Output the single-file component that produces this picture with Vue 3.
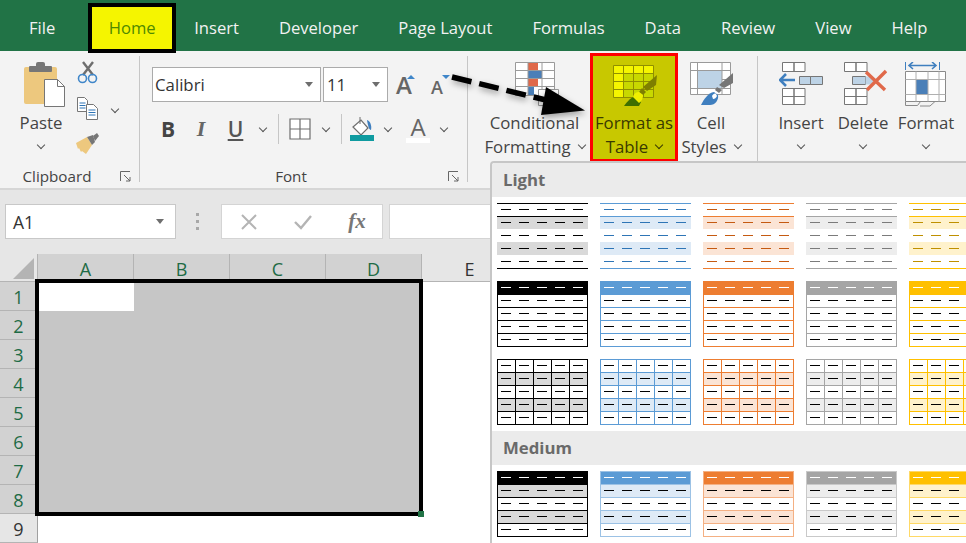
<template>
  <div class="excel">
    <!-- tabs -->
    <div class="tabs">
      <div v-for="t in tabs" :key="t" class="tab" :class="{ home: t === 'Home' }">{{ t }}</div>
    </div>

    <!-- ribbon -->
    <div class="ribbon">
      <div class="group clipboard">
        <div class="group-body clip-body">
          <div class="big-btn paste-btn">
            <svg class="big-icon paste-icon" width="41" height="45" viewBox="0 0 41 45">
              <rect x="0" y="5" width="33" height="37" rx="2" fill="#edc87e" />
              <rect x="5" y="4" width="23" height="6" rx="1" fill="#767676" />
              <rect x="12" y="0" width="9" height="6" rx="2" fill="#767676" />
              <path d="M20.5 17.5h13l7 7v20h-20z" fill="#fff" stroke="#767676" />
              <path d="M33.5 17.5v7h7" fill="none" stroke="#767676" />
            </svg>
            <span class="btn-line">Paste</span>
            <span class="btn-line"><i class="chev"></i></span>
          </div>
          <div class="small-col">
            <svg width="22" height="23" viewBox="0 0 22 23">
              <path d="M6 14L16 1M16 14L6 1" stroke="#6e6e6e" stroke-width="2.4" fill="none" />
              <circle cx="5.5" cy="17.5" r="4" fill="none" stroke="#3f86c9" stroke-width="1.6" />
              <circle cx="15.5" cy="17.5" r="4" fill="none" stroke="#3f86c9" stroke-width="1.6" />
            </svg>
            <svg width="22" height="23" viewBox="0 0 22 23">
              <path d="M.5.5h7l3 3v11H.5z" fill="#fff" stroke="#767676" />
              <path d="M2.5 6h6M2.5 8.5h6M2.5 11h6" stroke="#2e75b6" />
              <path d="M9.5 7.5h7l4 4v11h-11z" fill="#fff" stroke="#767676" />
              <path d="M11.5 13h7M11.5 15.5h7M11.5 18h7" stroke="#2e75b6" />
            </svg>
            <svg width="24" height="22" viewBox="0 0 24 22">
              <path d="M0 10l11-6 5 8-6 9-4-3-1 1-2-4-1 1z" fill="#edc87e" />
              <path d="M11 4l6-2 2 7-3 3z" fill="#767676" />
              <path d="M17 3l4-3 2 3-4 5z" fill="#767676" />
            </svg>
          </div>
          <i class="chev copy-chev"></i>
        </div>
        <div class="group-label">
          <span>Clipboard</span>
          <span class="launcher">
            <svg width="11" height="11" viewBox="0 0 11 11">
              <path d="M.5 10V.5H10M4 4l6 6M10 6v4H6" fill="none" stroke="#666" />
            </svg>
          </span>
        </div>
      </div>
      <div class="sep"></div>

      <div class="group font">
        <div class="group-body font-body">
          <div class="font-row">
            <div class="combo font-name"><span>Calibri</span><i class="caret"></i></div>
            <div class="combo font-size"><span>11</span><i class="caret"></i></div>
            <span class="grow-a">A<i class="tri"></i></span>
            <span class="shrink-a">A<i class="tri tri-down"></i></span>
          </div>
          <div class="font-tools">
            <span class="tool tool-b">B</span>
            <span class="tool tool-i">I</span>
            <span class="tool tool-u">U</span>
            <span class="tool"><i class="chev"></i></span>
            <span class="tool"><i class="tool-sep"></i></span>
            <span class="tool">
              <svg width="22" height="22" viewBox="0 0 22 22">
                <path d="M1 1h20v20H1zM11 1v20M1 11h20" fill="#fff" stroke="#6e6e6e" stroke-width="1.2" />
              </svg>
            </span>
            <span class="tool"><i class="chev"></i></span>
            <span class="tool"><i class="tool-sep"></i></span>
            <span class="tool">
              <svg width="24" height="24" viewBox="0 0 24 24">
                <path d="M3 10l8-7 7 8-7 7z" fill="#fff" stroke="#6e6e6e" stroke-width="1.2" />
                <path d="M10 0v7" stroke="#6e6e6e" />
                <path d="M17 3c3 1 5 5 4 10-2 0-3-4-4-10z" fill="#3f7fbf" />
                <rect x="0" y="18" width="24" height="6" fill="#0f9ba0" />
              </svg>
            </span>
            <span class="tool"><i class="chev"></i></span>
            <span class="tool font-color">A</span>
            <span class="tool"><i class="chev"></i></span>
          </div>
        </div>
        <div class="group-label">
          <span>Font</span>
          <span class="launcher">
            <svg width="11" height="11" viewBox="0 0 11 11">
              <path d="M.5 10V.5H10M4 4l6 6M10 6v4H6" fill="none" stroke="#666" />
            </svg>
          </span>
        </div>
      </div>
      <div class="sep"></div>

      <div class="group styles">
        <div class="group-body styles-body">
          <div class="big-btn cond-btn">
            <svg class="big-icon" width="44" height="45" viewBox="0 0 44 45">
              <path d="M.5.5h39v33H.5z" fill="#fff" stroke="#9a9a9a" />
              <rect x="13" y="1" width="10" height="7" fill="#e0694a" />
              <rect x="13" y="9" width="14" height="7" fill="#4a7fb8" />
              <rect x="13" y="17" width="10" height="7" fill="#e0694a" />
              <rect x="13" y="25" width="6" height="8" fill="#4a7fb8" />
              <path d="M13 .5v33M27 .5v33M.5 8.5h39M.5 16.5h39M.5 24.5h39" fill="none" stroke="#9a9a9a" />
              <path d="M23.5 27.5h20v16h-20zM33.5 27.5v16" fill="#fff" stroke="#9a9a9a" />
            </svg>
            <span class="btn-line">Conditional</span>
            <span class="btn-line">Formatting <i class="chev"></i></span>
          </div>
          <div class="big-btn table-btn">
            <svg class="big-icon" width="48" height="45" viewBox="0 0 48 45">
              <rect x="3.500" y="3.500" width="40" height="32" fill="#f5f500" />
              <rect x="13" y="11" width="30.500" height="24.500" fill="#c8d800" />
              <path d="M3.500 3.500h40v32h-40zM13.500 3.500v32M23.500 3.500v32M33.500 3.500v32M3.500 11.500h40M3.500 19.500h40M3.500 27.500h40" fill="none" stroke="#8f8f00" />
              <path d="M47 13l-1 10-9 6-4-4z" fill="#7f7f00" />
              <path d="M32 26l4 4-3 3-4-3z" fill="#7f7f00" />
              <path d="M14 44c3-4 6-8 10-9l7 5-2 4z" fill="#3e6f00" />
              <path d="M23 35c1-4 4-5 6-5l4 3c0 3-1 6-4 8z" fill="#f0f000" />
            </svg>
            <span class="btn-line">Format as</span>
            <span class="btn-line">Table <i class="chev"></i></span>
          </div>
          <div class="big-btn cell-btn">
            <svg class="big-icon" width="48" height="45" viewBox="0 0 48 45">
              <path d="M3.500.500h40v32h-40z" fill="#fff" stroke="#9a9a9a" />
              <rect x="10" y="8" width="25" height="18" fill="#bdd3e6" />
              <path d="M3.500 8.500h40M3.500 26.500h40M10.500 .500v32M35 .500v32M35 17.500h8" fill="none" stroke="#9a9a9a" />
              <path d="M46 11v10l-9 5-5-3z" fill="#767676" />
              <path d="M30 25l5 3-3 3-4-3z" fill="#767676" />
              <path d="M14 43c3-6 7-12 13-13l4 3c1 5-3 10-8 10z" fill="#3f7fbf" />
              <path d="M25 34c1-2 3-3 4-2l1 2c-1 2-2 3-4 3z" fill="#fff" />
            </svg>
            <span class="btn-line">Cell</span>
            <span class="btn-line">Styles <i class="chev"></i></span>
          </div>
        </div>
      </div>
      <div class="sep"></div>

      <div class="group cells">
        <div class="group-body cells-body">
          <div class="big-btn insert-btn">
            <svg class="big-icon" width="44" height="45" viewBox="0 0 44 45">
              <path d="M3.500.500h11.500v9H3.500zM15 .500h11v9H15z" fill="#fff" stroke="#767676" />
              <path d="M1 18h15M7 12l-6 6 6 6" fill="none" stroke="#3f7fbf" stroke-width="2.600" />
              <path d="M20.500 14.500h11v8h-11zM31.500 14.500h12v8h-12z" fill="#bdd3e6" stroke="#767676" />
              <path d="M3.500 26.500h11.500v8H3.500zM15 26.500h11v8H15zM3.500 34.500h11.500v8H3.500zM15 34.500h11v8H15z" fill="#fff" stroke="#767676" />
            </svg>
            <span class="btn-line">Insert</span>
            <span class="btn-line"><i class="chev"></i></span>
          </div>
          <div class="big-btn delete-btn">
            <svg class="big-icon" width="48" height="45" viewBox="0 0 48 45">
              <path d="M5.500.500h11.500v9H5.500zM17 .500h11v9H17z" fill="#fff" stroke="#767676" />
              <path d="M13.500 14.500h13v8h-13z" fill="#bdd3e6" stroke="#767676" />
              <path d="M26.500 14.500h5l4 4-4 4h-5z" fill="#bdd3e6" />
              <path d="M5.500 26.500h11.500v8H5.500zM17 26.500h11v8H17zM5.500 34.500h11.500v8H5.500zM17 34.500h11v8H17z" fill="#fff" stroke="#767676" />
              <path d="M27 10l19 18M47 9L28 28" stroke="#e0694a" stroke-width="3.400" fill="none" />
            </svg>
            <span class="btn-line">Delete</span>
            <span class="btn-line"><i class="chev"></i></span>
          </div>
          <div class="big-btn format-btn">
            <svg class="big-icon" width="42" height="45" viewBox="0 0 42 45">
              <path d="M.500 0v8M34.500 0v8" stroke="#3f7fbf" fill="none" />
              <path d="M4 3.500h27M8 0L4 3.500 8 7M27 0l4 3.500L27 7" stroke="#3f7fbf" stroke-width="1.600" fill="none" />
              <path d="M.500 9.500h40v30H.500z" fill="#fff" stroke="#8a8a8a" />
              <rect x="11" y="17" width="12" height="15" fill="#4a7fb8" />
              <path d="M11 9.500v30M23 9.500v30M34 9.500v30M.500 17.500h40M.500 32.500h40" fill="none" stroke="#b0b0b0" />
              <path d="M.500 39.500v4h12l3-4M15 44h10l5-4.500" fill="none" stroke="#8a8a8a" />
            </svg>
            <span class="btn-line">Format</span>
            <span class="btn-line"><i class="chev"></i></span>
          </div>
        </div>
      </div>
    </div>

    <!-- formula bar -->
    <div class="formula-bar">
      <div class="name-box"><span>A1</span><i class="caret"></i></div>
      <div class="grip"><i></i><i></i><i></i></div>
      <div class="fx-buttons">
        <svg width="18" height="18" viewBox="0 0 18 18">
          <path d="M2 2l14 14M16 2L2 16" stroke="#b4b4b4" stroke-width="2" />
        </svg>
        <svg width="20" height="18" viewBox="0 0 20 18">
          <path d="M2 9l6 6L18 3" stroke="#b4b4b4" stroke-width="2.400" fill="none" />
        </svg>
        <span class="fx-label">fx</span>
      </div>
      <div class="fx-input"></div>
    </div>

    <!-- sheet -->
    <div class="sheet">
      <div class="corner"><i></i></div>
      <div v-for="c in columns" :key="c" class="col-head" :class="{ active: c !== 'E' }">{{ c }}</div>
      <template v-for="r in 9" :key="r">
        <div class="row-head" :class="{ active: r < 9 }">{{ r }}</div>
        <div
          v-for="(c, i) in columns"
          :key="c"
          class="cell"
          :class="{ picked: r < 9 && i < 4 && !(r === 1 && i === 0) }"
        ></div>
      </template>
      <div class="selection"></div>
    </div>

    <!-- table styles dropdown -->
    <div class="gallery">
      <template v-for="sec in sections" :key="sec.title">
        <div class="gallery-title">{{ sec.title }}</div>
        <div class="swatches">
          <svg
            v-for="(sw, i) in sec.swatches"
            :key="i"
            class="swatch"
            width="91"
            height="66"
            viewBox="0 0 91 66"
          >
            <rect v-for="(b, j) in sw.rects" :key="j" x="0" :y="b.y" width="91" height="13" :fill="b.fill" />
            <line
              v-for="(l, j) in sw.lines"
              :key="j"
              :x1="l.x1"
              :y1="l.y1"
              :x2="l.x2"
              :y2="l.y2"
              :stroke="l.color"
            />
            <line
              v-for="(d, j) in sw.dashes"
              :key="j"
              :x1="d.x"
              :y1="d.y"
              :x2="d.x + 10"
              :y2="d.y"
              :stroke="d.color"
            />
          </svg>
        </div>
      </template>
    </div>

    <!-- dashed callout arrow -->
    <svg class="callout" width="966" height="543" viewBox="0 0 966 543">
      <g class="callout-shape">
        <path d="M452 77L550 101" stroke="#000" stroke-width="5.500" stroke-dasharray="20 8" fill="none" />
        <path d="M546 87L585 110.500L541 115z" fill="#000" />
      </g>
    </svg>
  </div>
</template>

<script setup>
const tabs = ['File', 'Home', 'Insert', 'Developer', 'Page Layout', 'Formulas', 'Data', 'Review', 'View', 'Help']
const columns = ['A', 'B', 'C', 'D', 'E']

const palettes = [
  { main: '#000000', shade: '#d9d9d9', dash: '#000000', soft: '#000000' },
  { main: '#5b9bd5', shade: '#deeaf6', dash: '#2e75b6', soft: '#9cc2e5' },
  { main: '#ed7d31', shade: '#fbe4d5', dash: '#c55a11', soft: '#f4b083' },
  { main: '#a5a5a5', shade: '#ededed', dash: '#7b7b7b', soft: '#c9c9c9' },
  { main: '#ffc000', shade: '#fff2cc', dash: '#bf9000', soft: '#ffd966' }
]

const rowY = (n) => n * 13 + 0.5
const hLine = (n, color) => ({ x1: 0, x2: 91, y1: rowY(n), y2: rowY(n), color })
const vLine = (x, color) => ({ x1: x, x2: x, y1: 0, y2: 66, color })

// five rows of five dashes, first row can have its own colour
function dashes(first, rest) {
  const out = []
  for (let r = 0; r < 5; r++) {
    for (let c = 0; c < 5; c++) {
      out.push({ x: 4 + c * 18, y: r * 13 + 6.5, color: r === 0 ? first : rest })
    }
  }
  return out
}

const bands = (p) => [{ y: 13, fill: p.shade }, { y: 39, fill: p.shade }]
const head = (p) => ({ y: 0, fill: p.main })
const rowLines = (color) => [0, 1, 2, 3, 4, 5].map((n) => hLine(n, color))

const lightBanded = (p) => ({
  rects: bands(p),
  lines: [0, 1, 5].map((n) => hLine(n, p.main)),
  dashes: dashes(p.dash, p.dash)
})
const lightRows = (p) => ({
  rects: [head(p)],
  lines: [...rowLines(p.main), vLine(0.5, p.main), vLine(90.5, p.main)],
  dashes: dashes('#ffffff', '#000000')
})
const lightGrid = (p) => ({
  rects: bands(p),
  lines: [...rowLines(p.main), ...[0, 1, 2, 3, 4, 5].map((n) => vLine(n * 18 + 0.5, p.main))],
  dashes: dashes('#000000', '#000000')
})
const mediumRows = (p) => ({
  rects: [head(p), ...bands(p)],
  lines: [...rowLines(p.soft), vLine(0.5, p.soft), vLine(90.5, p.soft)],
  dashes: dashes('#ffffff', '#000000')
})

const sections = [
  {
    title: 'Light',
    swatches: [...palettes.map(lightBanded), ...palettes.map(lightRows), ...palettes.map(lightGrid)]
  },
  { title: 'Medium', swatches: palettes.map(mediumRows) }
]
</script>

<style>
html,
body {
  margin: 0;
  background: #fff;
}
</style>

<style scoped>
.excel {
  position: relative;
  width: 966px;
  height: 543px;
  overflow: hidden;
  font-family: "Open Sans", "Liberation Sans", sans-serif;
  color: #333;
  background: #fff;
}

.tabs {
  display: flex;
  height: 51px;
  padding-left: 9px;
  background: #217346;
  box-sizing: border-box;
}
.tab {
  padding: 0 20px;
  font-size: 16.6px;
  line-height: 56px;
  color: #f2f2f2;
}
.tab.home {
  margin: 3px -2px -2px 13px;
  padding: 0 16.5px;
  border: 4px solid #000;
  background: #f5f500;
  color: #4f8a00;
  line-height: 42px;
  position: relative;
  z-index: 2;
}

.ribbon {
  display: flex;
  height: 137px;
  background: #f3f3f3;
  border-bottom: 2px solid #d6d6d6;
}
.group {
  display: flex;
  flex-direction: column;
}
.clipboard { width: 139px; }
.font { width: 327px; }
.styles { width: 289px; }
.cells { flex: 1; }
.group-body {
  display: flex;
  height: 113px;
  box-sizing: border-box;
}
.sep {
  width: 1px;
  margin: 5px 0 6px;
  background: #c6c6c6;
}
.group-label {
  display: flex;
  align-items: center;
  height: 24px;
  font-size: 15.2px;
  color: #444;
}
.group-label span:first-child {
  flex: 1;
  text-align: center;
}
.launcher {
  display: flex;
  width: 25px;
  justify-content: flex-start;
  padding-left: 6px;
  box-sizing: border-box;
}

.big-btn {
  display: flex;
  flex-direction: column;
  align-items: center;
  height: 109px;
  margin-top: 2px;
  padding-top: 6px;
  border: 3px solid transparent;
  box-sizing: border-box;
  font-size: 16.800px;
  color: #444;
}
.big-icon {
  display: block;
  height: 45px;
  margin-bottom: 3px;
  flex-shrink: 0;
}
.btn-line {
  display: flex;
  align-items: center;
  justify-content: center;
  gap: 8px;
  height: 24px;
  white-space: nowrap;
}
.chev {
  display: inline-block;
  width: 5px;
  height: 5px;
  margin-top: -3px;
  border-right: 1.3px solid #555;
  border-bottom: 1.3px solid #555;
  transform: rotate(45deg);
}
.caret {
  width: 0;
  height: 0;
  border-left: 4.500px solid transparent;
  border-right: 4.500px solid transparent;
  border-top: 5px solid #6e6e6e;
}

/* clipboard */
.clip-body { padding-left: 7px; }
.paste-btn { width: 68px; }
.paste-icon { margin-left: 7px; }
.small-col {
  display: flex;
  flex-direction: column;
  align-items: center;
  gap: 13px;
  width: 24px;
  margin-left: 1px;
  padding-top: 10px;
}
.copy-chev { margin: 55px 0 0 12px; }

/* font */
.font-body {
  flex-direction: column;
  padding: 16px 0 0 12px;
}
.font-row {
  display: flex;
  align-items: flex-end;
  height: 35px;
}
.combo {
  display: flex;
  align-items: center;
  justify-content: space-between;
  height: 35px;
  padding: 0 7px 0 2px;
  background: #fff;
  border: 1px solid #ababab;
  box-sizing: border-box;
  font-size: 16.800px;
  color: #333;
}
.font-name { width: 169px; }
.font-size {
  width: 65px;
  margin-left: 2px;
  padding-left: 3px;
}
.grow-a,
.shrink-a {
  position: relative;
  color: #666;
  font-weight: 600;
  line-height: 1;
}
.grow-a {
  margin: 0 0 5px 8px;
  font-size: 24px;
}
.shrink-a {
  margin: 0 0 6px 19px;
  font-size: 18px;
}
.tri {
  position: absolute;
  right: -3px;
  top: 2px;
  border-left: 4px solid transparent;
  border-right: 4px solid transparent;
  border-bottom: 4px solid #3f86c9;
}
.shrink-a .tri { right: -7px; top: -3px; }
.tri-down {
  border-bottom: 0;
  border-top: 4px solid #3f86c9;
}
.font-tools {
  display: grid;
  grid-template-columns: 32px 34px 35px 20px 10px 33px 20px 10px 32px 20px 40px 12px;
  height: 30px;
  margin-top: 12px;
}
.tool {
  display: flex;
  align-items: center;
  justify-content: center;
  font-size: 21px;
  color: #555;
}
.tool-b { font-weight: 700; color: #444; }
.tool-i { font-style: italic; font-family: "Liberation Serif", serif; font-size: 22px; font-weight: 700; color: #666; }
.tool-u { text-decoration: underline; font-weight: 600; }
.tool-sep {
  width: 1px;
  height: 30px;
  background: #c6c6c6;
}
.font-color {
  height: 28px;
  font-size: 24px;
  font-weight: 400;
  color: #666;
  line-height: 1;
  border-bottom: 5px solid #fff;
  box-sizing: border-box;
  margin: 1px 8px 0;
}

/* styles + cells */
.styles-body { padding-left: 11px; }
.cond-btn { width: 111px; }
.cond-btn .big-icon { margin-left: 4px; }
.table-btn {
  width: 88px;
  background: #c8c800;
  border-color: #f00;
  color: #3a3a00;
}
.table-btn .chev { border-color: #3a3a00; }
.cell-btn { width: 66px; }
.cells-body { padding-left: 13px; }
.insert-btn { width: 60px; }
.delete-btn { width: 64px; }
.format-btn { width: 62px; }

/* formula bar */
.formula-bar {
  display: flex;
  align-items: flex-start;
  height: 64px;
  padding: 14px 0 0 5px;
  background: #e6e6e6;
  box-sizing: border-box;
}
.name-box {
  display: flex;
  align-items: center;
  justify-content: space-between;
  width: 171px;
  height: 35px;
  padding: 0 11px 0 7px;
  background: #fff;
  border: 1px solid #c8c8c8;
  box-sizing: border-box;
  font-size: 17.500px;
}
.grip {
  display: flex;
  flex-direction: column;
  gap: 4px;
  width: 45px;
  padding: 9px 0 0 20px;
  box-sizing: border-box;
}
.grip i {
  width: 3px;
  height: 3px;
  background: #a8a8a8;
}
.fx-buttons {
  display: grid;
  grid-template-columns: repeat(3, 54px);
  place-items: center;
  width: 162px;
  height: 35px;
  background: #fff;
  border: 1px solid #d4d4d4;
  box-sizing: border-box;
}
.fx-label {
  font-family: "Liberation Serif", serif;
  font-style: italic;
  font-weight: 700;
  font-size: 21px;
  color: #777;
}
.fx-input {
  flex: 1;
  height: 35px;
  margin-left: 6px;
  background: #fff;
  border: 1px solid #d4d4d4;
  box-sizing: border-box;
}

/* sheet */
.sheet {
  position: relative;
  display: grid;
  grid-template-columns: 38px repeat(5, 96px);
  grid-template-rows: 28px repeat(9, 29px);
}
.corner {
  background: #e6e6e6;
  border-right: 1px solid #b4b4b4;
  border-bottom: 1px solid #b4b4b4;
  box-sizing: border-box;
}
.corner i {
  display: block;
  width: 21px;
  height: 21px;
  margin: 4px 0 0 13px;
  background: #b4b4b4;
  clip-path: polygon(100% 0, 100% 100%, 0 100%);
}
.col-head,
.row-head {
  display: flex;
  align-items: center;
  justify-content: center;
  padding-top: 2px;
  background: #e6e6e6;
  box-sizing: border-box;
  font-size: 18px;
  color: #333;
}
.col-head {
  border-right: 1px solid #b4b4b4;
  border-bottom: 1px solid #b4b4b4;
}
.row-head {
  border-right: 1px solid #a0a0a0;
  border-bottom: 1px solid #b4b4b4;
}
.col-head.active,
.row-head.active {
  background: #d2d2d2;
  color: #1e6b45;
}
.cell { background: #fff; }
.cell.picked { background: #c6c6c6; }
.selection {
  position: absolute;
  left: 35px;
  top: 25px;
  width: 388px;
  height: 237px;
  border: 4px solid #000;
  box-sizing: border-box;
}
.selection::after {
  content: "";
  position: absolute;
  right: -5px;
  bottom: -5px;
  width: 6px;
  height: 6px;
  background: #217346;
}

/* dropdown */
.gallery {
  position: absolute;
  left: 490px;
  top: 161px;
  right: 0;
  bottom: 0;
  overflow: hidden;
  background: #fff;
  border-top: 2px solid #c6c6c6;
  border-left: 2px solid #c6c6c6;
  border-top-left-radius: 4px;
}
.gallery-title {
  height: 34px;
  padding-left: 11px;
  background: #ebebeb;
  font-size: 16.800px;
  font-weight: 700;
  line-height: 34px;
  color: #6a6a6a;
}
.swatches {
  display: grid;
  grid-template-columns: repeat(5, 91px);
  gap: 12px;
  padding: 6px 0 6px 5px;
}
.swatch { display: block; }

.callout {
  position: absolute;
  left: 0;
  top: 0;
  pointer-events: none;
}
.callout-shape {
  filter: drop-shadow(1px 3px 3px rgba(0, 0, 0, 0.35));
}
</style>
